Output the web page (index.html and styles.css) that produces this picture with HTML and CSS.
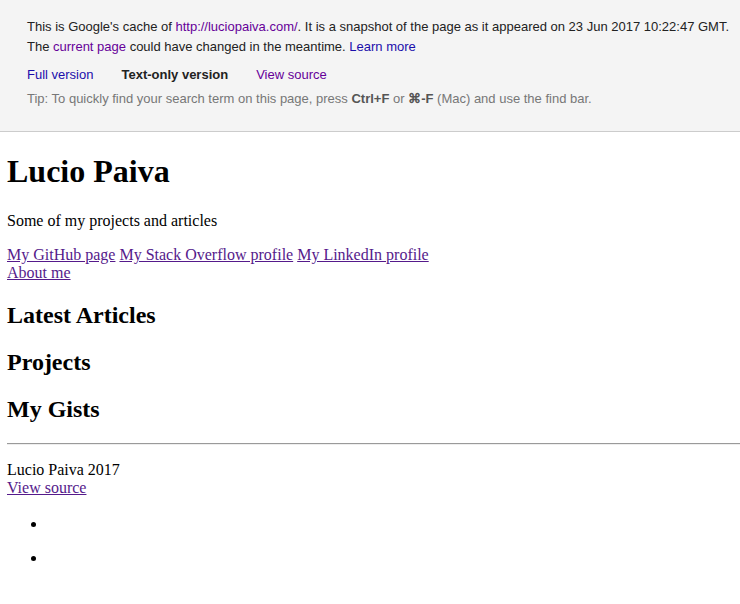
FILE: index.html
```html
<!DOCTYPE html>
<html>
<head>
<meta charset="utf-8">
<link rel="stylesheet" href="styles.css">
</head>
<body>
<div class="cache">
  <div class="cache-inner">
    <div class="line">This is Google's cache of <a class="visited" href="#">http://luciopaiva.com/</a>. It is a snapshot of the page as it appeared on 23 Jun 2017 10:22:47 GMT.</div>
    <div class="line">The <a class="visited" href="#">current page</a> could have changed in the meantime. <a class="blue" href="#">Learn more</a></div>
    <div class="versions">
      <a class="blue" href="#">Full version</a>
      <span class="current">Text-only version</span>
      <a class="visited" href="#">View source</a>
    </div>
    <div class="tip">Tip: To quickly find your search term on this page, press <b>Ctrl+F</b> or <b>⌘-F</b> (Mac) and use the find bar.</div>
  </div>
</div>
<div class="page">
  <h1>Lucio Paiva</h1>
  <p>Some of my projects and articles</p>
  <p class="links"><a href="#">My GitHub page</a> <a href="#">My Stack Overflow profile</a> <a href="#">My LinkedIn profile</a><br><a href="#">About me</a></p>
  <h2>Latest Articles</h2>
  <h2>Projects</h2>
  <h2>My Gists</h2>
  <hr>
  <p class="footer">Lucio Paiva 2017<br><a href="#">View source</a></p>
  <ul class="list">
    <li></li>
    <li></li>
  </ul>
</div>
</body>
</html>
```
FILE: styles.css
```css
html, body {
  margin: 0;
  padding: 0;
  background: #fff;
}
body {
  font-family: "Liberation Serif", serif;
  font-size: 16px;
  color: #000;
}
.cache {
  background: #f4f4f4;
  border-bottom: 1px solid #cccccc;
}
.cache-inner {
  padding: 17px 10px 22px 27px;
  font-family: "Liberation Sans", Arial, sans-serif;
  font-size: 13px;
  color: #222;
}
.cache a {
  text-decoration: none;
}
.cache .line {
  line-height: 20px;
  white-space: nowrap;
}
.visited {
  color: #660099;
}
.blue {
  color: #1a0dab;
}
.versions {
  display: flex;
  gap: 28px;
  margin-top: 8px;
  line-height: 20px;
}
.current {
  font-weight: bold;
  color: #222;
}
.tip {
  margin-top: 4px;
  line-height: 20px;
  color: #777;
}
.tip b {
  color: #555;
}
.page {
  padding: 0 0 0 7px;
}
.page a {
  color: #551a8b;
}
h1 {
  font-size: 32px;
  margin: 21.44px 0;
}
h2 {
  font-size: 24px;
  margin: 19.92px 0;
}
p {
  margin: 16px 0;
}
hr {
  margin: 8px 0;
  border: none;
  border-top: 1px solid #9a9a9a;
  border-bottom: 1px solid #eeeeee;
}
.list {
  margin: 18px 0 16px;
  padding-left: 40px;
}
.list li {
  height: 18px;
  margin-bottom: 16px;
}
```
